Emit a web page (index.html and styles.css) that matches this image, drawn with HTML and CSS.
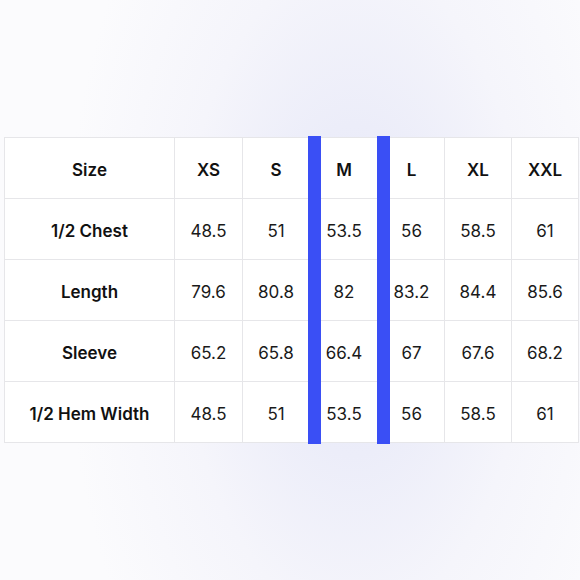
FILE: index.html
```html
<!DOCTYPE html>
<html>
<head>
<meta charset="utf-8">
<link rel="stylesheet" href="styles.css">
</head>
<body>
<div class="page">
  <div class="chart">
    <table class="sizes">
      <colgroup>
        <col class="c-label"><col class="c-xs"><col class="c-s"><col class="c-m"><col class="c-l"><col class="c-xl"><col class="c-xxl">
      </colgroup>
      <tr class="head"><th>Size</th><th>XS</th><th>S</th><th>M</th><th>L</th><th>XL</th><th>XXL</th></tr>
      <tr><th>1/2 Chest</th><td>48.5</td><td>51</td><td>53.5</td><td>56</td><td>58.5</td><td>61</td></tr>
      <tr><th>Length</th><td>79.6</td><td>80.8</td><td>82</td><td>83.2</td><td>84.4</td><td>85.6</td></tr>
      <tr><th>Sleeve</th><td>65.2</td><td>65.8</td><td>66.4</td><td>67</td><td>67.6</td><td>68.2</td></tr>
      <tr><th>1/2 Hem Width</th><td>48.5</td><td>51</td><td>53.5</td><td>56</td><td>58.5</td><td>61</td></tr>
    </table>
    <span class="bar bar-left"></span>
    <span class="bar bar-right"></span>
  </div>
</div>
</body>
</html>
```
FILE: styles.css
```css
html, body {
  margin: 0;
  padding: 0;
}
body {
  width: 580px;
  height: 580px;
  overflow: hidden;
  font-family: Inter, "Liberation Sans", sans-serif;
  color: #111;
}
.page {
  width: 580px;
  height: 580px;
  box-sizing: border-box;
  padding: 137px 2px 0 4px;
  background:
    radial-gradient(ellipse 50% 95% at 61% 50%, #e5e6f8 0%, #ecedf9 30%, #f5f5fb 60%, #fbfbfd 100%);
}
.chart {
  position: relative;
  width: 574px;
}
.sizes {
  border-collapse: collapse;
  table-layout: fixed;
  width: 574px;
  background: #fff;
}
.c-label { width: 170px; }
.c-xs { width: 68px; }
.c-s { width: 67px; }
.c-m { width: 69px; }
.c-l { width: 66px; }
.c-xl { width: 67px; }
.c-xxl { width: 67px; }
.sizes th, .sizes td {
  border: 1px solid #e6e6e9;
  height: 56px;
  padding: 4px 0 0;
  text-align: center;
  vertical-align: middle;
  font-size: 17px;
  line-height: 20px;
}
.sizes th {
  font-weight: 600;
}
.sizes td {
  font-weight: 400;
  color: #1a1a1a;
}
.bar {
  position: absolute;
  top: -1px;
  bottom: -1px;
  width: 13px;
  background: #3a4ff5;
}
.bar-left { left: 304px; }
.bar-right { left: 373px; }
```
